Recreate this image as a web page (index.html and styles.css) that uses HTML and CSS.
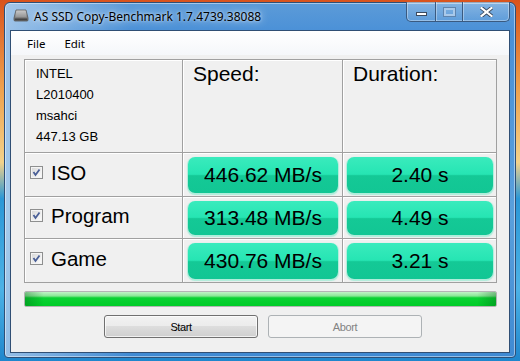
FILE: index.html
```html
<!DOCTYPE html>
<html lang="en">
<head>
    <meta charset="UTF-8">
    <title>AS SSD Copy-Benchmark</title>
    <link rel="stylesheet" href="styles.css">
</head>
<body>
    <div class="window">
        <!-- Title bar -->
        <div class="titlebar">
            <svg class="app-icon" width="16" height="13" viewBox="0 0 16 13">
                <defs>
                    <linearGradient id="drive" x1="0" y1="0" x2="0" y2="1">
                        <stop offset="0" stop-color="#d8d8d8"/>
                        <stop offset="0.6" stop-color="#8a8a8a"/>
                        <stop offset="1" stop-color="#5a5a5a"/>
                    </linearGradient>
                </defs>
                <path d="M3 1 H13 L15 9 V11 Q15 12 14 12 H2 Q1 12 1 11 V9 Z" fill="url(#drive)" stroke="#555" stroke-width="0.8"/>
                <path d="M4 2 V8 M6 2 V8 M8 2 V8 M10 2 V8 M12 2 V8" stroke="#b5b5b5" stroke-width="0.7"/>
                <rect x="2" y="9.5" width="12" height="1.5" fill="#444"/>
            </svg>
            <span class="title">AS SSD Copy-Benchmark 1.7.4739.38088</span>
            <div class="caption-buttons">
                <span class="cap cap-min"><i></i></span>
                <span class="cap cap-max"><i></i></span>
                <span class="cap cap-close">
                    <svg width="13" height="10" viewBox="0 0 13 10">
                        <path d="M1.5 1 L11.5 9 M11.5 1 L1.5 9" stroke="#3b4a5e" stroke-width="4" stroke-linecap="square"/>
                        <path d="M1.5 1 L11.5 9 M11.5 1 L1.5 9" stroke="#fff" stroke-width="2.2" stroke-linecap="square"/>
                    </svg>
                </span>
            </div>
        </div>

        <!-- Client area -->
        <div class="client">
            <div class="menubar">
                <span>File</span>
                <span>Edit</span>
            </div>
            <div class="content">
                <div class="results">
                    <div class="cell info">
                        <div>INTEL</div>
                        <div>L2010400</div>
                        <div>msahci</div>
                        <div>447.13 GB</div>
                    </div>
                    <div class="cell head">Speed:</div>
                    <div class="cell head">Duration:</div>

                    <div class="cell label"><span class="check"></span>ISO</div>
                    <div class="cell speed"><div class="value">446.62 MB/s</div></div>
                    <div class="cell time"><div class="value">2.40 s</div></div>

                    <div class="cell label"><span class="check"></span>Program</div>
                    <div class="cell speed"><div class="value">313.48 MB/s</div></div>
                    <div class="cell time"><div class="value">4.49 s</div></div>

                    <div class="cell label"><span class="check"></span>Game</div>
                    <div class="cell speed"><div class="value">430.76 MB/s</div></div>
                    <div class="cell time"><div class="value">3.21 s</div></div>
                </div>

                <div class="progress"><div class="fill"></div></div>

                <div class="buttons">
                    <button class="btn">Start</button>
                    <button class="btn" disabled>Abort</button>
                </div>
            </div>
        </div>
    </div>
</body>
</html>
```

FILE: styles.css
```css
body {
    margin: 0;
    width: 520px;
    height: 361px;
    overflow: hidden;
    background: linear-gradient(to bottom, #d9531c 0%, #eea24e 25%, #f3d28a 45%, #2a97d6 55%, #4cb2e6 80%, #1f86cc 100%);
    font-family: "Liberation Sans", Arial, sans-serif;
}
.window {
    box-sizing: border-box;
    width: 512px;
    height: 356px;
    margin: 2px 0 0 4px;
    padding: 0 5px 4px 5px;
    border: 1px solid #2d4f78;
    border-radius: 6px 6px 4px 4px;
    background:
        linear-gradient(to right, rgba(255, 255, 255, 0.45) 0, rgba(255, 255, 255, 0) 25%),
        linear-gradient(to bottom, #5c9bd8 0, #4a90d7 30px, #5aa0dc 60%, #3f8ad3 100%);
    box-shadow: inset 0 0 0 1px rgba(255, 255, 255, 0.45);
    display: flex;
    flex-direction: column;
}
.titlebar {
    height: 26px;
    display: flex;
    align-items: flex-start;
}
.app-icon {
    margin: 6px 0 0 3px;
}
.title {
    margin: 6px 0 0 5px;
    font-family: "Segoe UI", "Noto Sans", sans-serif;
    font-size: 12px;
    line-height: 15px;
    color: #000;
    text-shadow: 0 0 8px rgba(255, 255, 255, 0.9), 0 0 3px rgba(255, 255, 255, 0.7);
}
.caption-buttons {
    margin: -1px 0 0 auto;
    height: 19px;
    display: flex;
    border: 1px solid #3a5a80;
    border-top: none;
    border-radius: 0 0 5px 5px;
    background: linear-gradient(to bottom, rgba(255, 255, 255, 0.25), rgba(255, 255, 255, 0.08));
    box-shadow: inset 0 0 0 1px rgba(255, 255, 255, 0.35);
    overflow: hidden;
}
.cap {
    display: flex;
    align-items: center;
    justify-content: center;
    border-left: 1px solid #3a5a80;
    box-shadow: inset 1px 0 0 rgba(255, 255, 255, 0.35);
}
.cap:first-child {
    border-left: none;
    box-shadow: none;
}
.cap-min {
    width: 28px;
}
.cap-min i {
    width: 9px;
    height: 2px;
    margin-top: 4px;
    background: #fff;
    border: 1px solid #3b4a5e;
}
.cap-max {
    width: 26px;
}
.cap-max i {
    width: 7px;
    height: 4px;
    border: 2px solid #a9c9ea;
    outline: 1px solid #5f84ad;
}
.cap-close {
    width: 46px;
}
.client {
    flex: 1;
    margin-top: 1px;
    border: 1px solid #304f74;
    background: #f0f0f0;
    display: flex;
    flex-direction: column;
}
.menubar {
    height: 24px;
    display: flex;
    align-items: center;
    gap: 19px;
    padding-left: 16px;
    font-family: "Segoe UI", "Noto Sans", sans-serif;
    font-size: 11.5px;
    background: linear-gradient(to bottom, #ffffff, #f5f7fa);
}
.content {
    padding: 4px 12px 0 13px;
}
.results {
    display: grid;
    grid-template-columns: 157px 159px 153px;
    grid-template-rows: 92px 43px 41px 43px;
    gap: 1px;
    padding: 1px;
    background: #a0a0a0;
    width: fit-content;
}
.cell {
    background: #f0f0f0;
    box-shadow: inset 1px 1px 0 #fff;
}
.info {
    padding: 3px 0 0 11px;
    font-size: 13px;
    line-height: 21px;
}
.head {
    padding: 2px 0 0 10px;
    font-size: 21px;
    line-height: 24px;
}
.label {
    display: flex;
    align-items: center;
    padding: 0 0 4px 5px;
    font-size: 20.5px;
}
.check {
    box-sizing: border-box;
    width: 13px;
    height: 13px;
    margin-right: 8px;
    border: 1px solid #8e8f8f;
    background:
        url("data:image/svg+xml;utf8,<svg xmlns='http://www.w3.org/2000/svg' width='11' height='11'><path d='M2.5 5 L4.5 8 L8.5 2.5' fill='none' stroke='%234a5f97' stroke-width='1.8'/></svg>") center / 11px 11px no-repeat,
        linear-gradient(135deg, #d6d6d6, #ffffff);
    box-shadow: inset 0 0 0 1px #f4f4f4;
}
.speed {
    padding: 4px 4px 3px 5px;
    display: flex;
}
.time {
    padding: 4px 3px 3px 4px;
    display: flex;
}
.value {
    flex: 1;
    display: flex;
    align-items: center;
    justify-content: center;
    border-radius: 7px;
    font-size: 21px;
    color: #000;
    background: linear-gradient(to bottom, #3aebbd 0%, #26e5b3 48%, #14c996 52%, #12c694 100%);
    box-shadow: 0 1px 1px 1px rgba(130, 235, 205, 0.6);
}
.progress {
    width: 471px;
    height: 14px;
    margin-top: 8px;
    border: 1px solid #b4b4b4;
    border-radius: 2px;
    background: #e6e6e6;
    overflow: hidden;
}
.fill {
    height: 100%;
    background:
        linear-gradient(to right, rgba(0, 90, 20, 0.35) 0, rgba(0, 90, 20, 0) 4%, rgba(0, 90, 20, 0) 96%, rgba(0, 90, 20, 0.35) 100%),
        linear-gradient(to bottom, #c2f3c8 0%, #8ae896 28%, #0bd233 42%, #00cc28 100%);
}
.buttons {
    display: flex;
    gap: 10px;
    margin: 8px 0 0 80px;
}
.btn {
    width: 154px;
    height: 23px;
    padding: 0;
    border: 1px solid #707070;
    border-radius: 3px;
    font-family: "Liberation Sans", Arial, sans-serif;
    font-size: 11px;
    letter-spacing: -0.4px;
    color: #000;
    background: linear-gradient(to bottom, #f2f2f2 0%, #ebebeb 50%, #dddddd 50%, #cfcfcf 100%);
    box-shadow: inset 0 0 0 1px rgba(255, 255, 255, 0.7);
}
.btn:disabled {
    border-color: #adb2b5;
    color: #838383;
    background: #f4f4f4;
    box-shadow: none;
}
```
